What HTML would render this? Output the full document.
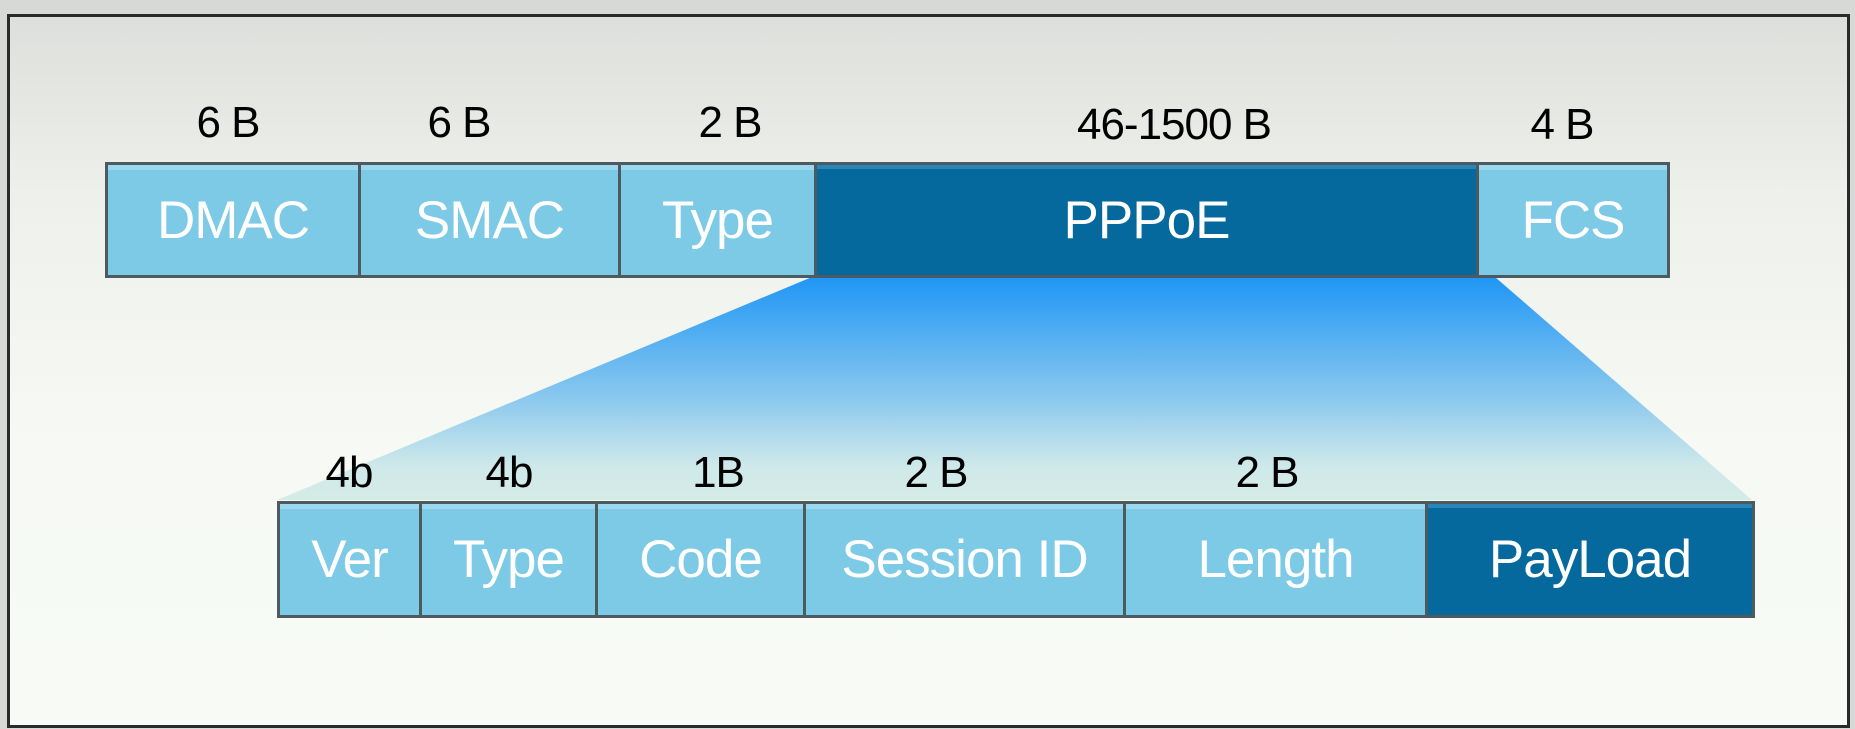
<!DOCTYPE html>
<html><head><meta charset="utf-8"><style>
html,body{margin:0;padding:0}
body{width:1855px;height:729px;position:relative;overflow:hidden;background:#d6d9d5;font-family:"Liberation Sans",Arial,sans-serif}
#frame{position:absolute;left:7px;top:14px;width:1837px;height:708px;border:3px solid #2a2a2a;background:linear-gradient(#dcdfdb 0%,#eef0ec 25%,#f6f9f4 60%,#f7faf5 100%)}
.b{position:absolute;box-sizing:border-box;border:3px solid #4d5b60;background:#7ccae6;color:#fff;text-align:center;font-size:53px;display:flex;align-items:center;justify-content:center;box-shadow:inset 0 5px 0 #9ad8ef;letter-spacing:-1px}
.d{background:#06699d;box-shadow:inset 0 4px 0 #2a86b8}
.l{position:absolute;font-size:44px;color:#000;transform:translateX(-50%);white-space:nowrap;line-height:1;letter-spacing:-1px}
svg{position:absolute;left:0;top:0}
</style></head><body>
<div id="frame"></div>
<svg width="1855" height="729"><defs><linearGradient id="g" x1="0" y1="0" x2="0" y2="1"><stop offset="0" stop-color="#1f96f5"/><stop offset="0.55" stop-color="#8cc9ee"/><stop offset="0.85" stop-color="#cfe9ea"/><stop offset="1" stop-color="#d5ece6"/></linearGradient></defs>
<polygon points="812,277 1495,277 1752,500 277,500" fill="url(#g)"/></svg>
<div class="l" style="left:228px;top:101px">6 B</div>
<div class="l" style="left:459px;top:101px">6 B</div>
<div class="l" style="left:730px;top:101px">2 B</div>
<div class="l" style="left:1174px;top:103px">46-1500 B</div>
<div class="l" style="left:1562px;top:103px">4 B</div>
<div class="b" style="left:105px;top:162px;width:256px;height:116px">DMAC</div>
<div class="b" style="left:358px;top:162px;width:263px;height:116px">SMAC</div>
<div class="b" style="left:618px;top:162px;width:199px;height:116px">Type</div>
<div class="b d" style="left:814px;top:162px;width:665px;height:116px">PPPoE</div>
<div class="b" style="left:1476px;top:162px;width:194px;height:116px">FCS</div>
<div class="l" style="left:349px;top:451px">4b</div>
<div class="l" style="left:509px;top:451px">4b</div>
<div class="l" style="left:718px;top:451px">1B</div>
<div class="l" style="left:936px;top:451px">2 B</div>
<div class="l" style="left:1267px;top:451px">2 B</div>
<div class="b" style="left:277px;top:501px;width:145px;height:117px">Ver</div>
<div class="b" style="left:419px;top:501px;width:179px;height:117px">Type</div>
<div class="b" style="left:595px;top:501px;width:211px;height:117px">Code</div>
<div class="b" style="left:803px;top:501px;width:323px;height:117px">Session ID</div>
<div class="b" style="left:1123px;top:501px;width:305px;height:117px">Length</div>
<div class="b d" style="left:1425px;top:501px;width:330px;height:117px">PayLoad</div>
</body></html>
